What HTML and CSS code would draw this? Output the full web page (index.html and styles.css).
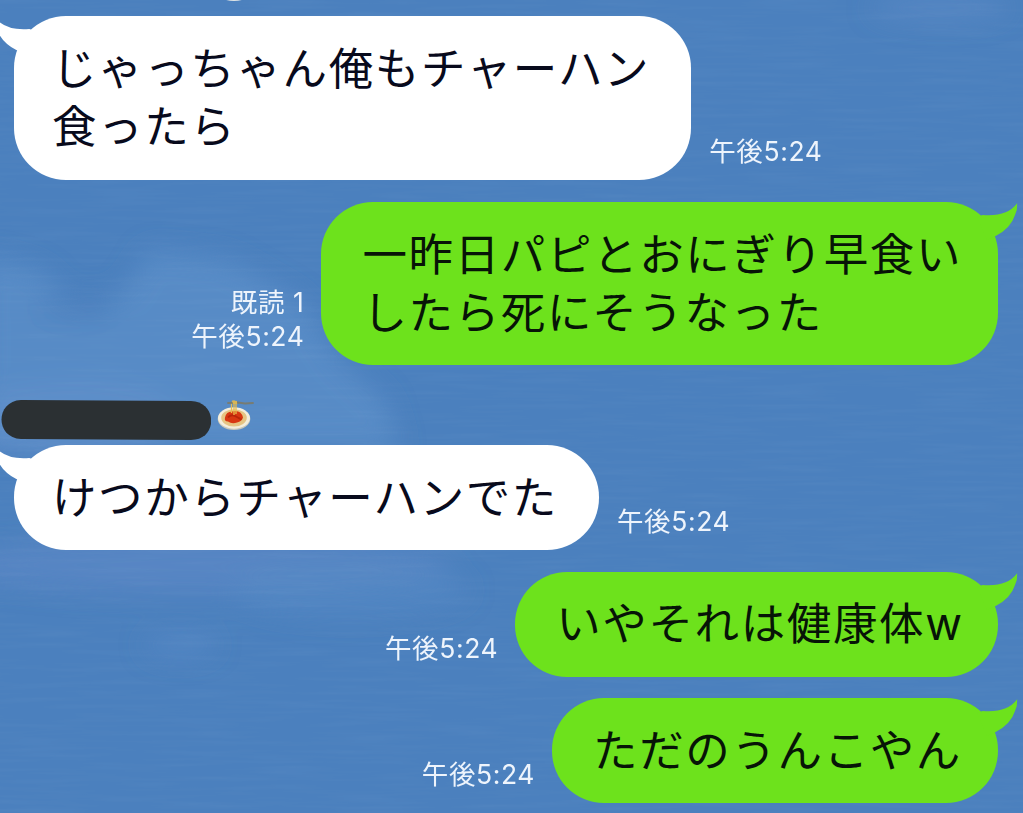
FILE: index.html
```
<!DOCTYPE html>
<html lang="ja">
<head>
<meta charset="utf-8">
<title>トーク</title>
<link rel="stylesheet" href="styles.css">
</head>
<body>
<main class="chat">
  <svg class="sky" viewBox="0 0 1023 813" aria-hidden="true">
    <defs>
      <filter id="soft" x="-30%" y="-30%" width="160%" height="160%"><feGaussianBlur stdDeviation="13"/></filter>
      <filter id="weave" x="0" y="0" width="100%" height="100%">
        <feTurbulence type="fractalNoise" baseFrequency="0.012 0.22" numOctaves="2" seed="4"/>
        <feColorMatrix values="0 0 0 0 1  0 0 0 0 1  0 0 0 0 1  0.3 0 0 0 -0.11"/>
      </filter>
    </defs>
    <g filter="url(#soft)">
      <path d="M-20 255L40 270 80 310 125 290 150 250 230 260 300 300 340 360 385 400 400 450 -20 450Z" fill="#5a8dc8" opacity=".85"/>
      <ellipse cx="75" cy="310" rx="44" ry="14" fill="#4b7fbd" opacity=".6"/>
      <ellipse cx="70" cy="420" rx="110" ry="36" fill="#6691cc" opacity=".4"/>
      <ellipse cx="200" cy="565" rx="250" ry="28" fill="#618bc9" opacity=".5"/>
      <ellipse cx="350" cy="590" rx="120" ry="28" fill="#5b8bc7" opacity=".4"/>
      <ellipse cx="180" cy="645" rx="36" ry="12" fill="#588ac6" opacity=".6"/>
      <ellipse cx="940" cy="8" rx="70" ry="12" fill="#618fca" opacity=".5"/>
    </g>
    <rect width="1023" height="813" filter="url(#weave)" opacity=".2"/>
    <ellipse cx="234" cy="-5" rx="14" ry="6" fill="#dfe4e6"/>
  </svg>

  <section class="row row-in row-first">
    <div class="bubble">じゃっちゃん俺もチャーハン<br>食ったら
      <svg class="tail" viewBox="0 0 40 38"><path d="M-2 15L3.700 13Q28 15 38.200 1.200Q38.500 8 36 13Q32 26 16.700 34L8 38Z"/></svg>
    </div>
    <div class="meta">午後5:24</div>
  </section>

  <section class="row row-out">
    <div class="meta">既読 1<br>午後5:24</div>
    <div class="bubble">一昨日パピとおにぎり早食い<br>したら死にそうなった
      <svg class="tail" viewBox="0 0 40 38"><path d="M-2 15L3.700 13Q28 15 38.200 1.200Q38.500 8 36 13Q32 26 16.700 34L8 38Z"/></svg>
    </div>
  </section>

  <div class="sender">
    <svg class="redacted" viewBox="0 0 210 42"><path d="M20 1L190 2C217 3 217 41 190 41L20 40C-6 39-6 2 20 1Z"/></svg>
    <svg class="pasta" viewBox="0 0 37 33">
      <ellipse cx="17" cy="20" rx="16.300" ry="11" fill="#c8c7ba"/>
      <ellipse cx="17" cy="19" rx="16" ry="10.700" fill="#f4eedc"/>
      <ellipse cx="17" cy="18.800" rx="12.800" ry="8.600" fill="#e6c583"/>
      <path d="M8 18.500Q9 12.500 15 12.500Q24 10.500 26 18.500Q25 22.500 20 23.500Q15 25.500 11 22.500Q7 22.500 8 18.500Z" fill="#d83711"/>
      <path d="M11 18.500Q14 14.500 19 17.500T24 19.500" fill="none" stroke="#b82509" stroke-width="2"/>
      <path d="M14.500 4V14M17 4V16M19 3.500V15M14.500 4Q17 0 20.500 5" fill="none" stroke="#e8bd4f" stroke-width="1.300"/>
      <path d="M11 4L21 3.500 28 4.500 36 4" fill="none" stroke="#777c73" stroke-width="1.800" stroke-linecap="round"/>
      <path d="M15 1.500L20 2 20 5 16 5Z" fill="#d9b654"/>
    </svg>
  </div>

  <section class="row row-in">
    <div class="bubble">けつからチャーハンでた
      <svg class="tail" viewBox="0 0 40 38"><path d="M-2 15L3.700 13Q28 15 38.200 1.200Q38.500 8 36 13Q32 26 16.700 34L8 38Z"/></svg>
    </div>
    <div class="meta">午後5:24</div>
  </section>

  <section class="row row-out">
    <div class="meta">午後5:24</div>
    <div class="bubble">いやそれは健康体<span class="latin">w</span>
      <svg class="tail" viewBox="0 0 40 38"><path d="M-2 15L3.700 13Q28 15 38.200 1.200Q38.500 8 36 13Q32 26 16.700 34L8 38Z"/></svg>
    </div>
  </section>

  <section class="row row-out">
    <div class="meta">午後5:24</div>
    <div class="bubble">ただのうんこやん
      <svg class="tail" viewBox="0 0 40 38"><path d="M-2 15L3.700 13Q28 15 38.200 1.200Q38.500 8 36 13Q32 26 16.700 34L8 38Z"/></svg>
    </div>
  </section>
</main>
</body>
</html>
```
FILE: styles.css
```
* { box-sizing: border-box; }

body {
  margin: 0;
  background: #4b80be;
  font-family: "Noto Sans CJK JP", sans-serif;
}

.chat {
  position: relative;
  width: 1023px;
  height: 813px;
  overflow: hidden;
  padding: 16px 25px 0 14px;
  display: flex;
  flex-direction: column;
}

.sky {
  position: absolute;
  inset: 0;
  width: 1023px;
  height: 813px;
}

.row {
  position: relative;
  display: flex;
  flex-shrink: 0;
  align-items: flex-end;
  gap: 18px;
  margin-bottom: 21.5px;
}

.row-first { margin-bottom: 22px; }
.row-out { justify-content: flex-end; }

.bubble {
  position: relative;
  padding: 20.5px 41px 26.5px 38px;
  border-radius: 52px;
  background: #fff;
  color: #080a1c;
  font-size: 44.5px;
  letter-spacing: 1.620px;
  line-height: 58px;
  white-space: nowrap;
}

.row-first .bubble { padding-bottom: 27.5px; }

.row-out .bubble {
  background: #6de21c;
  color: #071407;
  padding-left: 41px;
  padding-right: 36px;
}

.latin {
  font-family: Inter, sans-serif;
  font-size: 45px;
  line-height: 1;
  letter-spacing: 0;
}

.tail {
  position: absolute;
  top: 0;
  width: 40px;
  height: 38px;
  overflow: visible;
}

.row-out .tail { right: -21px; fill: #6de21c; }
.row-in .tail { left: -21px; fill: #fff; transform: scaleX(-1); }

.meta {
  padding-bottom: 12px;
  color: #eef4fc;
  font-family: Inter, "Noto Sans CJK JP", sans-serif;
  font-size: 26.5px;
  letter-spacing: 0.6px;
  line-height: 34px;
  text-align: right;
  white-space: nowrap;
}

.row-out .meta { margin-right: -1px; }

.sender {
  position: relative;
  display: flex;
  align-items: flex-start;
  gap: 6px;
  height: 58.5px;
  flex-shrink: 0;
  margin-left: -13px;
  padding-top: 12.5px;
}

.redacted { width: 210px; height: 42px; fill: #2b3033; }
.pasta { width: 37px; height: 33px; }
```
